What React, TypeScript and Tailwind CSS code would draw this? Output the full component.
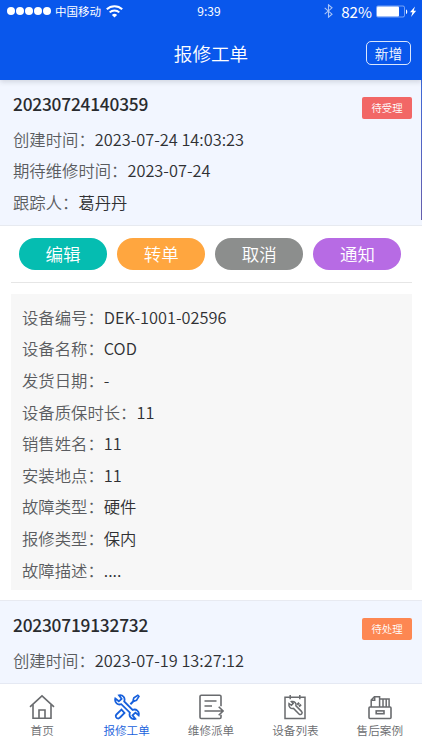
import type { ReactNode } from 'react';

interface Field {
  label: string;
  value: string;
}

const orderFields: Field[] = [
  { label: '创建时间', value: '2023-07-24 14:03:23' },
  { label: '期待维修时间', value: '2023-07-24' },
  { label: '跟踪人', value: '葛丹丹' },
];

const nextOrderFields: Field[] = [{ label: '创建时间', value: '2023-07-19 13:27:12' }];

const deviceFields: Field[] = [
  { label: '设备编号', value: 'DEK-1001-02596' },
  { label: '设备名称', value: 'COD' },
  { label: '发货日期', value: '-' },
  { label: '设备质保时长', value: '11' },
  { label: '销售姓名', value: '11' },
  { label: '安装地点', value: '11' },
  { label: '故障类型', value: '硬件' },
  { label: '报修类型', value: '保内' },
  { label: '故障描述', value: '....' },
];

const actions = [
  { label: '编辑', color: 'bg-[#05bdb1]' },
  { label: '转单', color: 'bg-[#ffa63f]' },
  { label: '取消', color: 'bg-[#8c8e8d]' },
  { label: '通知', color: 'bg-[#b76be4]' },
];

function FieldRow({ label, value }: Field) {
  return (
    <div className="h-[31.6px] whitespace-nowrap text-[16.35px] font-[350] leading-[31.6px] text-[#2f3033]">
      <span className="text-[#5a5c60]">{label}：</span>
      {value}
    </div>
  );
}

function StatusBar() {
  return (
    <div className="flex h-[22px] items-center pl-[7px] pr-[5px] text-white">
      <div className="flex flex-1 items-center">
        <div className="flex gap-[1px]">
          {[0, 1, 2, 3, 4].map((dot) => (
            <span key={dot} className="size-2 rounded-full bg-white" />
          ))}
        </div>
        <span className="ml-1 text-[11.5px] leading-[22px]">中国移动</span>
        <svg className="ml-[5px] h-[13px] w-[17px]" viewBox="0 0 17 13" fill="none" stroke="currentColor" strokeWidth="2">
          <path d="M.8 4.3C5 .1 12 .1 16.2 4.3" />
          <path d="M3.7 7.4c2.6-2.6 7-2.6 9.6 0" />
          <path d="M8.5 12.5 5.9 9.9c1.5-1.4 3.7-1.4 5.2 0z" fill="currentColor" stroke="none" />
        </svg>
      </div>
      <span className="mr-[6px] text-xs leading-[22px]">9:39</span>
      <div className="flex flex-1 items-center justify-end">
        <svg className="mr-[8px] h-[14px] w-[9px] opacity-65" viewBox="0 0 9 14" fill="none" stroke="currentColor" strokeWidth="1.1">
          <path d="M.7 3.8 8 10.2 4.5 13.2V.8L8 3.8.7 10.2" />
        </svg>
        <span className="text-[15.2px] leading-[20px]">82%</span>
        <svg className="ml-[4px] h-[13px] w-[41px]" viewBox="0 0 41 13">
          <rect x=".5" y="1" width="28" height="11" rx="1.5" fill="none" stroke="#fff" strokeOpacity=".45" />
          <rect x="1" y="1.5" width="22" height="10" rx="1" fill="#fff" />
          <path d="M30 4.5c1.7.4 1.7 4.1 0 4.5z" fill="#fff" />
          <path d="m39 1.5-5 5.8h2.5L35 12l5.2-6.2h-2.5z" fill="#fff" />
        </svg>
      </div>
    </div>
  );
}

interface OrderHeadProps {
  id: string;
  status: string;
  statusColor: string;
  fields: Field[];
}

function OrderHead({ id, status, statusColor, fields }: OrderHeadProps) {
  return (
    <div className="pl-[13px] pt-[8px]">
      <div className="flex h-[35.5px] items-start justify-between">
        <h2 className="text-[17.3px] font-medium leading-[31px] tracking-[-0.2px] text-[#292b2f]">{id}</h2>
        <span className={`mt-[8.5px] h-[22px] w-[50px] rounded-[2px] text-center text-[10.4px] font-[350] leading-[22px] text-white ${statusColor}`}>
          {status}
        </span>
      </div>
      {fields.map((field) => (
        <FieldRow key={field.label} {...field} />
      ))}
    </div>
  );
}

function TabIcon({ children }: { children: ReactNode }) {
  return (
    <svg className="size-[26px]" viewBox="0 0 26 26" fill="none" stroke="currentColor" strokeWidth="1.6">
      {children}
    </svg>
  );
}

const tabs = [
  {
    label: '首页',
    icon: (
      <>
        <path d="M1 12.8 13 1.8l12 11" />
        <path d="M4 10.5v13.8h18V10.5M10 24v-8h6v8" />
      </>
    ),
  },
  {
    label: '报修工单',
    active: true,
    icon: (
      <>
        <path d="M1.3 4.5 4.8 7.3 7.6 4.8 5 1.3C9 .5 11.5 4 10.2 7.5l8.4 8.4c3.5-1.3 7.1 1.3 6.1 5.4l-3.3-2.7-2.9 2.7 2.8 3.5c-4.1 1-6.7-2.6-5.4-6.1L7.3 10.2C3.8 11.4.3 8.6 1.3 4.5Z" strokeWidth="1.8" />
        <path d="m16.4 10.3 3.7-3.8" strokeWidth="2" />
        <path d="m19.2 6 .7-2.2 3.9-2.4 1.1 1.1-2.4 3.9-2.2.7z" strokeWidth="1.7" />
        <path d="m7.4 15.6-5 4.9c-1.3 1.3-.6 4 1.9 4 .8 0 1.2-.5 1.7-1l4.5-4.5z" strokeWidth="1.8" />
      </>
    ),
  },
  {
    label: '维修派单',
    icon: (
      <>
        <path d="M23 12.2V2.6c0-.8-.5-1.3-1.3-1.3H3.3c-.8 0-1.3.5-1.3 1.3v20.6c0 .8.5 1.3 1.3 1.3h18.4c.8 0 1.3-.5 1.3-1.3v-2.4" />
        <path d="M6.5 7h12M6.5 12h7.5M6.5 17H25M20.7 12.7l4.4 4.3-4.4 4.3" />
      </>
    ),
  },
  {
    label: '设备列表',
    icon: (
      <>
        <path d="M3 3.2h20v21.3H3zM8.2 1v4.3M17.8 1v4.3" strokeWidth="1.5" />
        <path d="m7 9.5 2.4 1.8 1.8-1.9-1.7-1.8c3-.7 5.2 1.6 4.4 4.1l5.6 5.7c1.8 1.9-.7 4.4-2.5 2.6l-5.5-5.6c-2.7.8-5.2-1.6-4.5-4.9Z" strokeWidth="1.5" />
        <path d="m15.2 10.7 2-2M17 12.5l2-2" strokeWidth="2" />
      </>
    ),
  },
  {
    label: '售后案例',
    icon: (
      <>
        <rect x="2" y="13" width="22" height="11.5" rx="1" />
        <rect x="9.2" y="16.9" width="7.8" height="2.8" />
        <path d="M4.2 13V6l3.2-3.3h5.2V13M7.7 2.8v3.5H4.2M12.8 5h9.3v8M16 5v8M19.2 5v8" strokeWidth="1.5" />
      </>
    ),
  },
];

export default function App() {
  return (
    <div className="flex h-[750px] w-[422px] flex-col overflow-hidden bg-white font-['Noto_Sans_CJK_SC',sans-serif]">
      {/* Header */}
      <header className="z-10 h-20 shrink-0 bg-[#0957ec] shadow-[0_2px_5px_rgba(40,45,60,0.16)]">
        <StatusBar />
        <div className="grid h-[62px] grid-cols-[1fr_auto_1fr] items-center px-[11px]">
          <h1 className="col-start-2 text-[18.6px] font-[350] leading-7 text-white">报修工单</h1>
          <button className="h-[24px] w-[45px] justify-self-end rounded-[5px] border border-white/85 text-[13.8px] font-[350] leading-[22px] text-white">
            新增
          </button>
        </div>
      </header>

      {/* Work orders */}
      <main className="min-h-0 flex-1 overflow-hidden">
        <section>
          <div className="flex h-[146px] border-b border-[#e7eaf0] bg-[#f2f6ff]">
            <div className="flex-1 pr-[9px]">
              <OrderHead id="20230724140359" status="待受理" statusColor="bg-[#f26766]" fields={orderFields} />
            </div>
            <span className="h-[140px] w-px bg-linear-to-b from-[#3c68d8] to-[#665fac]" />
          </div>
          <div className="ml-[11px] mr-[10px] flex h-[57px] justify-between border-b border-[#e6e6e6] pl-2 pr-[10.5px] pt-[12.4px]">
            {actions.map(({ label, color }) => (
              <button key={label} className={`h-8 w-[88px] rounded-full text-[17.5px] font-[350] leading-8 text-white ${color}`}>
                {label}
              </button>
            ))}
          </div>
          <div className="ml-[11px] mr-[10px] mt-[11px] h-[296px] bg-[#f7f7f7] px-[11px] pt-[7.8px]">
            {deviceFields.map((field) => (
              <FieldRow key={field.label} {...field} />
            ))}
          </div>
        </section>
        <section className="mt-[10px] h-[140px] border-t border-[#e8eaf1] bg-[#f2f6ff] pr-[10px]">
          <OrderHead id="20230719132732" status="待处理" statusColor="bg-[#fd8752]" fields={nextOrderFields} />
        </section>
      </main>

      {/* Bottom tabs */}
      <nav className="grid h-[67px] shrink-0 grid-cols-5 border-t border-[#e5e9f3] bg-white">
        {tabs.map(({ label, icon, active }) => (
          <a key={label} className={`flex flex-col items-center pt-[10px] ${active ? 'text-[#1760dc]' : 'text-[#696b6e]'}`}>
            <TabIcon>{icon}</TabIcon>
            <span className="text-[11.6px] font-[350] leading-[20px]">{label}</span>
          </a>
        ))}
      </nav>
    </div>
  );
}
